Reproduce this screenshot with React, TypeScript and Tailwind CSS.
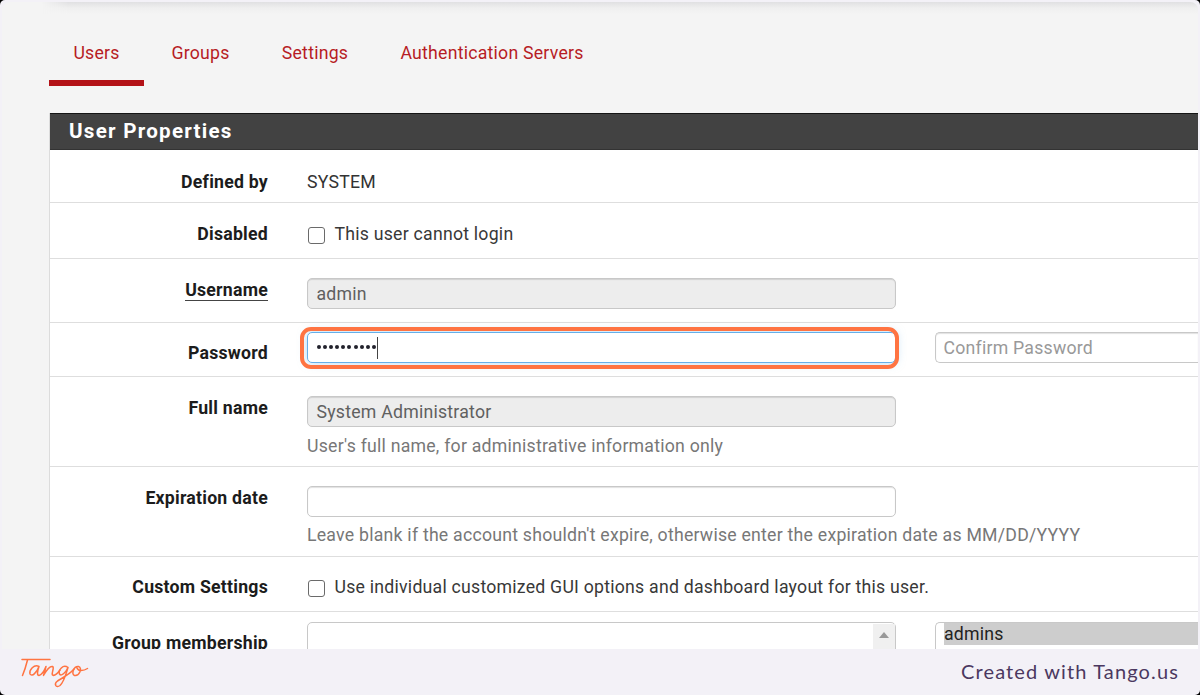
import type { ReactNode } from "react";

const tabs = [
  { name: "Users", box: "w-[95px]", active: true },
  { name: "Groups", box: "w-[113px]" },
  { name: "Settings", box: "w-[116px]" },
  { name: "Authentication Servers", box: "w-[238px]" },
];

function Row({ label, height, pad = "pt-[19px]", underline, children }: { label: string; height: string; pad?: string; underline?: boolean; children: ReactNode }) {
  return (
    <div className={`flex shrink-0 border-b border-[#dedede] ${height}`}>
      <div className={`w-[218px] shrink-0 text-right leading-6 font-bold whitespace-nowrap text-[#1c1c1c] ${pad}`}>
        <span className={underline ? "inline-block h-[23px] border-b border-[#444]" : ""}>{label}</span>
      </div>
      <div className="ml-[39px] min-w-0 flex-1">{children}</div>
    </div>
  );
}

function Field({ value, disabled }: { value?: string; disabled?: boolean }) {
  return (
    <div
      className={`h-[31px] w-[589px] rounded-[5px] border border-[#c8c8c8] px-[8.5px] leading-[30px] text-[#606060] shadow-[inset_0_1px_1px_rgba(0,0,0,0.12)] ${disabled ? "bg-[#ededed]" : "bg-white"}`}
    >
      {value}
    </div>
  );
}

function Check({ children, pad = "pt-[19px]" }: { children: ReactNode; pad?: string }) {
  return (
    <div className={`flex items-center leading-6 whitespace-nowrap text-[#383838] ${pad}`}>
      <span className="mt-[2px] ml-px h-[17px] w-[17px] shrink-0 rounded-[3px] border border-[#6a6a6a] bg-white" />
      <span className="ml-[9.5px]">{children}</span>
    </div>
  );
}

export default function App() {
  return (
    <div className="h-[695px] w-[1200px] overflow-hidden bg-black font-['Roboto',sans-serif] text-[17.7px] tracking-[0.23px]">
      <div className="flex h-full flex-col overflow-hidden rounded-[5px] bg-[#f3f1f7] pt-[2px]">
        <main className="mx-[2px] flex h-[647px] flex-col overflow-hidden rounded-t-[8px] bg-[#f4f4f4]">
          <div className="ml-[40px] h-[12px] shrink-0 bg-linear-to-b from-[#e0e0e2] via-[#efefef] to-[#f4f4f4] mask-l-from-[1130px] mask-l-to-[1156px]" />
          <nav className="ml-[47px] flex h-[72px] shrink-0 text-[#b71c24]">
            {tabs.map((t) => (
              <div
                key={t.name}
                className={`flex shrink-0 justify-center border-b-[6px] pt-[27px] leading-6 whitespace-nowrap ${t.box} ${t.active ? "border-[#b31217]" : "border-transparent"}`}
              >
                {t.name}
              </div>
            ))}
          </nav>
          <section className="mt-[27px] ml-[47px] flex min-h-0 flex-1 flex-col border-l border-[#dcdcdc] bg-white">
            <h2 className="h-[37px] shrink-0 border-t border-b border-t-[#151515] border-b-[#333] bg-[#424242] pl-[19px] text-[20.6px] leading-[35px] font-bold tracking-[1.25px] text-white">
              User Properties
            </h2>
            <Row label="Defined by" height="h-[53px]" pad="pt-[20px]">
              <div className="pt-[20px] leading-6 text-[#333]">SYSTEM</div>
            </Row>
            <Row label="Disabled" height="h-[56px]">
              <Check>This user cannot login</Check>
            </Row>
            <Row label="Username" height="h-[64px]" underline>
              <div className="pt-[19px]">
                <Field value="admin" disabled />
              </div>
            </Row>
            <Row label="Password" height="h-[54px]" pad="pt-[18px]">
              <div className="flex pt-[9px]">
                <div className="relative flex h-[31px] w-[589px] shrink-0 items-center rounded-[5px] border border-[#66afe9] bg-white pl-[9px] shadow-[0_0_10px_rgba(102,175,233,0.5)]">
                  <span className="flex gap-[2.1px]">
                    {Array.from({ length: 10 }, (_, i) => (
                      <span key={i} className="mt-[-2px] h-[4px] w-[4px] rounded-full bg-[#22222c]" />
                    ))}
                  </span>
                  <span className="ml-px h-[22px] w-px bg-[#444]" />
                  <span className="absolute -top-[6px] -right-[4px] -bottom-[7px] -left-[8px] rounded-[11px] border-4 border-[#ff7442]" />
                </div>
                <div className="ml-[39px] h-[31px] flex-1 rounded-l-[5px] border border-r-0 border-[#c8c8c8] pl-[7.5px] leading-[30px] text-[#999] shadow-[inset_0_1px_1px_rgba(0,0,0,0.12)]">
                  Confirm Password
                </div>
              </div>
            </Row>
            <Row label="Full name" height="h-[90px]">
              <div className="pt-[19px]">
                <Field value="System Administrator" disabled />
                <p className="mt-[7px] leading-6 text-[#777]">User's full name, for administrative information only</p>
              </div>
            </Row>
            <Row label="Expiration date" height="h-[90px]">
              <div className="pt-[19px]">
                <Field />
                <p className="mt-[6px] leading-6 whitespace-nowrap text-[#777]">
                  Leave blank if the account shouldn't expire, otherwise enter the expiration date as MM/DD/YYYY
                </p>
              </div>
            </Row>
            <Row label="Custom Settings" height="h-[55px]" pad="pt-[18px]">
              <Check pad="pt-[18px]">Use individual customized GUI options and dashboard layout for this user.</Check>
            </Row>
            <Row label="Group membership" height="h-[90px]">
              <div className="flex pt-[10px]">
                <div className="flex h-[80px] w-[589px] shrink-0 justify-end rounded-[5px] border border-[#c8c8c8] pt-px">
                  <div className="flex w-[22px] justify-center bg-[#f0f0f0] pt-[8px]">
                    <svg width="10" height="6" viewBox="0 0 10 6">
                      <path d="M5 0 10 6H0Z" fill="#999" />
                    </svg>
                  </div>
                </div>
                <div className="ml-[39px] h-[80px] flex-1 rounded-l-[5px] border border-r-0 border-[#c8c8c8] pl-[8px]">
                  <div className="h-[22px] bg-[#cdcdcd] leading-[22px] text-[#222]">admins</div>
                </div>
              </div>
            </Row>
          </section>
        </main>
        <footer className="flex flex-1 items-start justify-between pr-[21px] pl-[20px]">
          <svg className="mt-[8px]" width="70" height="34" viewBox="0 0 70 34" fill="none" stroke="#ff7442" strokeWidth="1.5" strokeLinecap="round" strokeLinejoin="round">
            <path d="M2 2.5H30" />
            <path d="M7.5 3C6 9 4 15 2.5 18.5" />
            <path d="M19 9.5C14 7 9 13 10 17C12 20.5 17 15 19 9.5C17 15 17 18.5 19 18.5C22 18 24.500 13 26 9.500C25 14 24 16 23.500 18.500C26 14 30 9 32.500 9.500C35 10.500 31 16 32.500 18C34.500 19.500 38 16 40 13" />
            <path d="M48 10.5C43 6.500 38 13.500 39.500 17C41.500 20 46 15 48 10.500C46 17 44 25 40 28.500C36 31.500 33.500 27 37.500 24C43 20.500 50 17 54 12" />
            <path d="M58.500 9.500C53.500 9 51 17.500 54.500 18.500C59 19.500 63 11 58.500 9.500C55.500 9 57 13.500 61 13.500C64 13.500 66 12.500 67.500 11.500" />
          </svg>
          <span className="mt-[10px] font-['Lato',sans-serif] text-[20px] leading-6 tracking-[1.13px] whitespace-nowrap text-[#4b3860]">Created with Tango.us</span>
        </footer>
      </div>
    </div>
  );
}
